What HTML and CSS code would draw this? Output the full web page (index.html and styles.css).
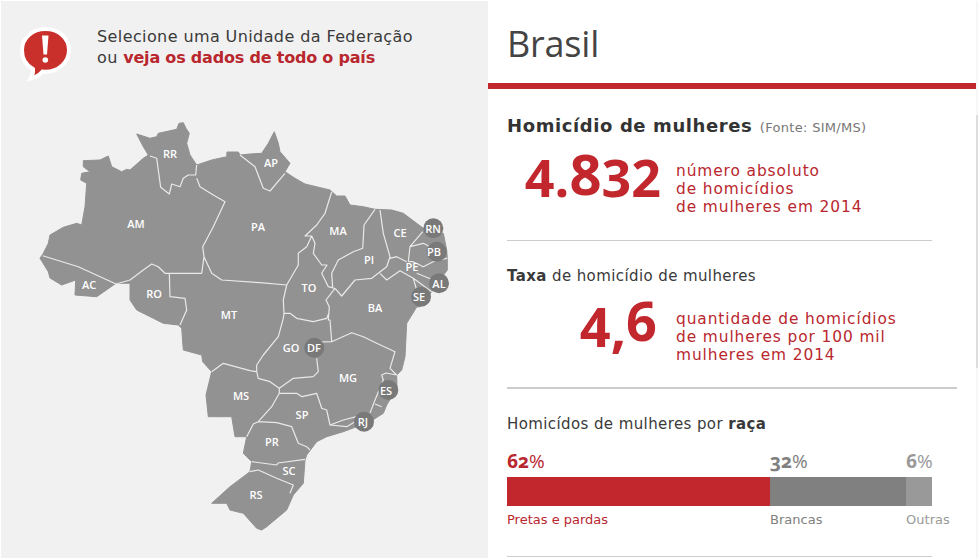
FILE: index.html
```html
<!DOCTYPE html>
<html lang="pt-BR">
<head>
    <meta charset="UTF-8">
    <title>Homicídio de mulheres - Brasil</title>
    <link rel="stylesheet" href="styles.css">
</head>
<body>
    <div class="page">
        <!-- Map column -->
        <section class="map-panel">
            <div class="notice">
                <svg class="notice-icon" width="56" height="56" viewBox="0 0 56 56">
                    <path class="bubble" d="M26.500 3C13.500 3 3 12 3 24c0 9 4.500 15.500 11 19 .5 3.500-.5 6.500-2.500 9.500 5-1 9-3.500 12-7 1 .1 2 .2 3 .2 13 0 23.500-9.700 23.500-21.700C50 12 39.500 3 26.500 3z"/>
                    <path class="bang" d="M23 9.500h6.500l-1.500 19h-3.500z"/>
                    <circle class="bang" cx="26.300" cy="34" r="2.800"/>
                </svg>
                <p class="notice-text">Selecione uma Unidade da Federação<br>ou <a class="notice-link" href="#">veja os dados de todo o país</a></p>
            </div>
            <svg class="map" width="487" height="558" viewBox="0 0 487 558">
                <path class="land" d="M136.700 134L150 138.300 156.700 136.700 158.300 133.300 176.700 129.300 179 123.300 183.300 122.700 186 128.300 189.300 133.300 186.700 143.300 190 155 196.700 165 211.700 160 226.700 156.700 227 152 238.300 152 240 155 250 154 261.700 153.300 268.300 143.300 274.300 131.700 278.300 143.300 280 151.700 290 163.300 285 171.700 295 178.300 305 184 330 190 336.700 196 345 196 350 205 363.300 206.700 375 209.300 391.700 210 403.300 213.300 423.300 228.300 443.300 233.300 446.700 250 447.300 258.300 447.300 270 440 280 431.700 291.700 420 306.700 416.700 307 406.700 323.300 405 356.700 401.700 370 396.700 375 397 388 386.700 405 383.300 413.300 370 421.700 356.700 426.700 343.300 431.700 326.700 436.700 316.700 441.700 306.700 455 305 460 303.300 483.300 293.300 495 286.700 510 266.700 526.700 261.700 530 256.700 528.300 243.300 513.300 230 510 226.700 503.300 211.700 503.300 230 486.700 250 471.700 251.700 461.700 243.300 453.300 246.700 436.700 235 436.700 231.700 416.700 208.300 416.700 206 395 211.700 371.700 202.700 361.700 201.700 355 183.300 350 181.700 328.300 178.300 325 163.300 323.300 136.700 310 130 300 130 283.300 116 283.300 96.700 296.700 75 295 75.700 280 61.700 285 50 278 48.300 271.700 40 258.300 43.300 253.300 48.300 243.300 50 235 63.300 227.300 76.700 223.300 81.700 225 85 206.700 86.700 183.300 80.700 180 81.700 173.300 90 171.700 83.300 166.700 83.300 160.700 100 160 108.300 156 111.700 166.700 121.700 171.700 126.700 169.300 130 170 143.300 158.300 148.300 155 143.300 146.700z"/>
                <!-- State borders -->
                <path class="borders" d="M42.700 255.700L78.300 266.700 116 284M116 284L130 280 143.300 270 151.700 264 158.300 266.700 165 273.300 169.300 273.300 201.700 273.300M201.700 273.300L204 256.700 202.700 246.700 213.300 226.700 225 201.700 213.300 195 200 186.700 196.700 178.300M196.700 165L195.700 175 188.300 175 183.300 178.300 180 186.700 171.700 184 169.300 194 160.700 187.300 158.300 170 156.700 158.300 150 156M204 256.700L211.700 273.300 221.700 280 260 282.700 286.700 285M169.300 273.300L170 296.700 185 298.300 186.700 310 180 325M240 155L255 166.700 263.300 188.300 270 191 285 173.300M331.700 191.700L325 213.300 316.700 225 305 236 311.700 236 306.700 246.700 298.300 253.300 298.300 265 286.700 285 283.300 300 284 313.300 283.300 318.300 278.300 336.700 263.300 355 256.700 365 256.700 371.700 250 370.700 223.300 363.300 211.700 371.700M256.700 371.700L258.300 378.300 270 381.700 279.300 388.300 279.300 393.300 271.700 406.700 258.300 421.700 253.300 424 246.700 436.700M258.300 421.700L276.700 422.700 291.700 426.700 298.300 443.300 306.700 446.700 310 450M251.700 461.700L276.700 465 278 463 305 459.300M250 471.700L258.300 470 276.700 478.300 293.300 485 290 493.300M279.300 388.300L293.300 378.300 313.300 376.700 318.300 371.700 316.700 358.300M284 313.300L290 313.300 296.700 318.300 313.300 321.700 326.700 318.300 329 313M335 288.300L326 300 329.300 306.700 328.300 320 330 320 331.700 341.700 320 342M331.700 341.700L351.700 332.700 363.300 336.700 376.700 343.300 395 351.700 390 368.300 396.700 375M396.700 375L386 373 381.700 375 383.300 380 375 400 370 413M375 404L381.700 406.700M279.300 393.300L296.700 393.300 302 396.700 316.700 393.300 321.700 408.300 326.700 410 330 425 343.300 420 356.700 416.700M330 425L346.700 426.700 356.700 420.700M311.700 236L315 243.300 313.300 253.300 321.700 265 327 265 321.700 273.300 328.300 286.700 335 288.300M375 209.300L364 225 363.300 238.300 362.700 248.300 353.300 251.700 338.300 260 331.700 273.300 332.700 288.300M335 288.300L341.700 296 355 280 371.700 278.300 386.700 266.700M380 210L383.300 233.300 390 256.700 386.700 266.700M390 258.300L396.700 256.700 406.700 261.700M422.700 231.700L410 246.700 408.300 261.700M410 246.700L423.300 243.300 430 246.700M408.300 261.700L413 261.700 423.300 266.700 436.700 260 447.300 258.300M380 273.300L386.700 280 400 270.700 413.300 278.300 431.700 291.700M416.700 273.300L433.300 280M413.300 278.300L416.700 290"/>
                <!-- Small states get a darker disc behind their label -->
                <circle class="disc" cx="433.300" cy="228.300" r="10"/>
                <circle class="disc" cx="436.700" cy="251.700" r="10"/>
                <circle class="disc" cx="439" cy="283.300" r="10"/>
                <circle class="disc" cx="421" cy="296.700" r="10"/>
                <circle class="disc" cx="314.300" cy="347.700" r="10"/>
                <circle class="disc" cx="388.300" cy="390" r="10"/>
                <circle class="disc" cx="364" cy="421.700" r="10"/>
                <g class="uf">
                    <text x="170" y="158">RR</text>
                    <text x="271" y="167">AP</text>
                    <text x="136" y="228">AM</text>
                    <text x="89" y="289">AC</text>
                    <text x="154" y="298">RO</text>
                    <text x="258" y="231">PA</text>
                    <text x="338" y="235">MA</text>
                    <text x="400" y="237">CE</text>
                    <text x="433" y="233">RN</text>
                    <text x="434" y="256">PB</text>
                    <text x="412" y="271">PE</text>
                    <text x="439" y="288">AL</text>
                    <text x="419" y="301">SE</text>
                    <text x="369" y="264">PI</text>
                    <text x="309" y="292">TO</text>
                    <text x="375" y="312">BA</text>
                    <text x="229" y="319">MT</text>
                    <text x="291" y="352">GO</text>
                    <text x="314" y="352">DF</text>
                    <text x="348" y="382">MG</text>
                    <text x="386" y="395">ES</text>
                    <text x="363" y="426">RJ</text>
                    <text x="241" y="400">MS</text>
                    <text x="302" y="419">SP</text>
                    <text x="272" y="446">PR</text>
                    <text x="289" y="475">SC</text>
                    <text x="256" y="499">RS</text>
                </g>
            </svg>
        </section>

        <!-- Data column -->
        <section class="detail">
            <header class="detail-head">
                <h1 class="detail-title">Brasil</h1>
            </header>
            <div class="detail-body">
                <div class="block block-first">
                    <h2 class="block-title"><strong class="block-main">Homicídio de mulheres</strong> <small class="source">(Fonte: SIM/MS)</small></h2>
                    <div class="stat">
                        <div class="stat-num">4.<span class="digit-tall">8</span>32</div>
                        <p class="stat-text">número absoluto<br>de homicídios<br>de mulheres em 2014</p>
                    </div>
                </div>
                <div class="block block-second">
                    <h3 class="sub-title"><b>Taxa</b> de homicídio de mulheres</h3>
                    <div class="stat">
                        <div class="stat-num stat-num-rate">4,<span class="digit-up">6</span></div>
                        <p class="stat-text">quantidade de homicídios<br>de mulheres por 100 mil<br>mulheres em 2014</p>
                    </div>
                </div>
                <div class="block block-third">
                    <h3 class="sub-title">Homicídos de mulheres por <b>raça</b></h3>
                    <div class="race">
                        <div class="race-item red" style="width: 61.9%">
                            <div class="race-pct">62<span class="pct-sign">%</span></div>
                            <div class="race-bar"></div>
                            <div class="race-label">Pretas e pardas</div>
                        </div>
                        <div class="race-item grey" style="width: 32%">
                            <div class="race-pct">32<span class="pct-sign">%</span></div>
                            <div class="race-bar"></div>
                            <div class="race-label">Brancas</div>
                        </div>
                        <div class="race-item light" style="width: 6.1%">
                            <div class="race-pct">6<span class="pct-sign">%</span></div>
                            <div class="race-bar"></div>
                            <div class="race-label">Outras</div>
                        </div>
                    </div>
                </div>
            </div>
        </section>

        <!-- Thin scrollbar on the data column -->
        <div class="scroll-track">
            <div class="scroll-thumb"></div>
        </div>
    </div>
</body>
</html>
```

FILE: styles.css
```css
* {
    margin: 0;
    padding: 0;
    box-sizing: border-box;
}

body {
    background: #fff;
    font-family: 'DejaVu Sans', sans-serif;
    color: #333;
    overflow: hidden;
}

.page {
    display: flex;
    width: 977px;
    height: 557px;
    margin: 1px 0 0 1px;
    overflow: hidden;
}

/* Map column */
.map-panel {
    position: relative;
    width: 487px;
    flex: none;
    background: #f1f1f1;
}

.notice {
    display: flex;
    align-items: flex-start;
    gap: 22px;
    padding: 25px 0 0 18px;
}

.notice-icon {
    flex: none;
}

.bubble {
    fill: #c9302c;
    stroke: #fff;
    stroke-width: 4;
}

.bang {
    fill: #fff;
}

.notice-text {
    font-size: 16px;
    line-height: 21px;
    letter-spacing: 0.4px;
    color: #3a3a3a;
}

.notice-link {
    color: #b9272e;
    font-weight: bold;
    letter-spacing: -0.2px;
    text-decoration: none;
}

.map {
    position: absolute;
    top: -1px;
    left: -1px;
}

.land {
    fill: #929292;
    stroke: #929292;
    stroke-width: 1;
    stroke-linejoin: round;
}

.borders {
    fill: none;
    stroke: #e9e9e9;
    stroke-width: 1.200;
    stroke-linejoin: round;
}

.disc {
    fill: #797979;
}

.uf text {
    fill: #fff;
    font-family: 'Open Sans', sans-serif;
    font-size: 11px;
    font-weight: 600;
    text-anchor: middle;
}

/* Data column */
.detail {
    flex: 1;
    background: #fff;
}

.detail-head {
    height: 88px;
    border-bottom: 6px solid #c1272d;
    padding: 21px 0 0 19px;
}

.detail-title {
    font-family: 'Open Sans', sans-serif;
    font-size: 36px;
    line-height: 44px;
    font-weight: 500;
    letter-spacing: -0.2px;
    color: #444;
}

.detail-body {
    padding-left: 19px;
}

.block-first {
    width: 425px;
    height: 152px;
    padding-top: 26px;
    border-bottom: 1px solid #ccc;
}

.block-second {
    width: 450px;
    height: 148px;
    padding-top: 25px;
    border-bottom: 2px solid #ccc;
}

.block-third {
    width: 425px;
    height: 168px;
    padding-top: 25px;
    border-bottom: 1px solid #ccc;
}

.block-title {
    font-size: 14px;
    line-height: 21px;
    font-weight: normal;
    white-space: nowrap;
}

.block-main {
    font-size: 18px;
    letter-spacing: 0.6px;
    color: #333;
}

.source {
    font-size: 13px;
    letter-spacing: 0.3px;
    color: #777;
    margin-left: 3px;
}

.sub-title {
    font-size: 15px;
    line-height: 20px;
    letter-spacing: 0.4px;
    font-weight: normal;
    color: #3a3a3a;
}

.stat {
    display: flex;
    gap: 15px;
    margin-top: 4px;
}

.stat-num {
    width: 154px;
    flex: none;
    padding-top: 3px;
    text-align: right;
    font-family: 'Open Sans', sans-serif;
    font-size: 52px;
    line-height: 64px;
    font-weight: 700;
    color: #c1272d;
}

.stat-num-rate {
    padding-right: 4px;
    font-size: 54px;
}

.digit-tall {
    font-size: 1.080em;
    line-height: 1;
    vertical-align: 2px;
}

.digit-up {
    line-height: 1;
    vertical-align: 6px;
}

.stat-text {
    font-size: 15.400px;
    line-height: 18px;
    letter-spacing: 0.9px;
    padding-top: 20px;
    white-space: nowrap;
    color: #b9272e;
}

/* Race bar */
.race {
    display: flex;
    margin-top: 15px;
}

.race-pct {
    font-family: 'Open Sans', sans-serif;
    font-feature-settings: 'onum';
    font-size: 19px;
    line-height: 24px;
    font-weight: 700;
    margin-bottom: 4px;
}

.pct-sign {
    font-weight: 400;
}

.race-bar {
    height: 29px;
}

.race-label {
    font-size: 13px;
    line-height: 16px;
    margin-top: 6px;
    white-space: nowrap;
}

.red .race-pct, .red .race-label {
    color: #b9272e;
}

.red .race-bar {
    background: #c1272d;
}

.grey .race-pct, .grey .race-label {
    color: #808080;
}

.grey .race-bar {
    background: #808080;
}

.light .race-pct, .light .race-label {
    color: #999;
}

.light .race-bar {
    background: #999;
}

/* Scrollbar */
.scroll-track {
    width: 2px;
    flex: none;
    background: #f7f7f7;
}

.scroll-thumb {
    height: 253px;
    margin-top: 114px;
    background: #ddd;
}
```
